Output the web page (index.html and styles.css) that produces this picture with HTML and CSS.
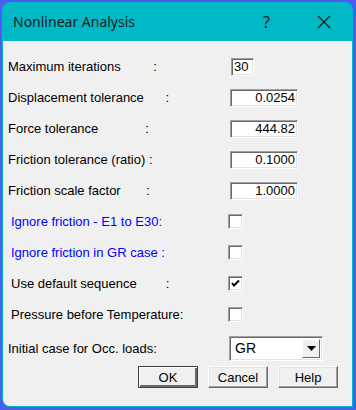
FILE: index.html
```html
<!DOCTYPE html>
<html lang="en">
<head>
    <meta charset="UTF-8">
    <meta name="viewport" content="width=device-width, initial-scale=1.0">
    <title>Nonlinear Analysis</title>
    <link rel="stylesheet" href="styles.css">
</head>
<body>
    <div class="window">
        <div class="titlebar">
            <span class="title">Nonlinear Analysis</span>
            <span class="help">?</span>
            <svg class="close" width="14" height="14" viewBox="0 0 14 14">
                <path d="M1 1 L13 13 M13 1 L1 13" stroke="#1a1a1a" stroke-width="1.2" fill="none"/>
            </svg>
        </div>
        <div class="content">
            <div class="form">
                <label class="lbl">Maximum iterations         :</label>
                <div class="field small">30</div>

                <label class="lbl">Displacement tolerance      :</label>
                <div class="field">0.0254</div>

                <label class="lbl">Force tolerance             :</label>
                <div class="field">444.82</div>

                <label class="lbl">Friction tolerance (ratio) :</label>
                <div class="field">0.1000</div>

                <label class="lbl">Friction scale factor       :</label>
                <div class="field">1.0000</div>

                <label class="lbl blue indent">Ignore friction - E1 to E30:</label>
                <div class="check"></div>

                <label class="lbl blue indent">Ignore friction in GR case :</label>
                <div class="check"></div>

                <label class="lbl indent">Use default sequence        :</label>
                <div class="check">
                    <svg width="11" height="11" viewBox="0 0 11 11">
                        <path d="M2 5 L4 7.5 L9 2.5" stroke="#000" stroke-width="2" fill="none"/>
                    </svg>
                </div>

                <label class="lbl indent">Pressure before Temperature:</label>
                <div class="check"></div>

                <label class="lbl combo-row">Initial case for Occ. loads:</label>
                <div class="combo combo-row">
                    <span class="combo-text">GR</span>
                    <span class="combo-btn">
                        <svg width="9" height="5" viewBox="0 0 9 5"><path d="M0 0 H9 L4.5 5 Z" fill="#000"/></svg>
                    </span>
                </div>
            </div>
            <div class="buttons">
                <button class="btn default">OK</button>
                <button class="btn">Cancel</button>
                <button class="btn">Help</button>
            </div>
        </div>
    </div>
</body>
</html>
```

FILE: styles.css
```css
body {
    margin: 0;
    width: 356px;
    height: 410px;
    background: #4a5cf2;
    font-family: "Liberation Sans", Arial, sans-serif;
    font-size: 13px;
    color: #000;
    overflow: hidden;
}
.window {
    margin: 2px 0 0 2px;
    width: 351px;
    height: 405px;
    display: flex;
    flex-direction: column;
}
.titlebar {
    height: 39px;
    background: #00b8c6;
    border-radius: 8px 8px 0 0;
    display: flex;
    align-items: center;
    color: #1a1a1a;
    font-family: "Noto Sans", "Open Sans", sans-serif;
}
.title {
    font-size: 14px;
    margin-left: 11px;
    flex: 1;
}
.help {
    font-size: 16px;
    margin-right: 47px;
}
.close {
    margin-right: 22px;
}
.content {
    flex: 1;
    background: #f0f0f0;
    border: 1px solid #00b8c6;
    border-top: none;
    border-radius: 0 0 0 8px;
    padding: 10px 0 0 5px;
}
.form {
    display: grid;
    grid-template-columns: 222px auto;
    grid-auto-rows: 31px;
    align-items: center;
}
.lbl {
    white-space: pre;
}
.indent {
    padding-left: 3px;
}
.blue {
    color: #0000ff;
}
.field {
    width: 64px;
    height: 16px;
    line-height: 16px;
    padding-right: 2px;
    text-align: right;
    background: #fff;
    border: 1px solid;
    border-color: #a0a0a0 #fff #fff #a0a0a0;
    box-shadow: inset 1px 1px #696969, inset -1px -1px #e3e3e3;
}
.field.small {
    width: 19px;
    margin-left: 1px;
    padding: 0 0 0 2px;
    text-align: left;
}
.check {
    width: 13px;
    height: 13px;
    margin-left: -2px;
    background: #fff;
    border: 1px solid;
    border-color: #a0a0a0 #fff #fff #a0a0a0;
    box-shadow: inset 1px 1px #696969, inset -1px -1px #e3e3e3;
    display: flex;
    align-items: center;
    justify-content: center;
}
.combo-row {
    margin-top: 5px;
}
.combo {
    width: 92px;
    height: 23px;
    margin-left: -1px;
    background: #fff;
    border: 1px solid;
    border-color: #a0a0a0 #fff #fff #a0a0a0;
    box-shadow: inset 1px 1px #696969, inset -1px -1px #e3e3e3;
    display: flex;
    align-items: center;
    font-size: 14px;
}
.combo-text {
    flex: 1;
    padding-left: 5px;
}
.combo-btn {
    width: 16px;
    height: 17px;
    margin-right: 2px;
    background: #f0f0f0;
    border: 1px solid;
    border-color: #fff #696969 #696969 #fff;
    display: flex;
    align-items: center;
    justify-content: center;
}
.buttons {
    display: flex;
    justify-content: flex-end;
    gap: 10px;
    margin-top: 5px;
    padding-right: 14px;
}
.btn {
    width: 60px;
    height: 22px;
    padding: 0;
    font-family: "Liberation Sans", Arial, sans-serif;
    font-size: 13px;
    color: #000;
    background: #f0f0f0;
    border: 1px solid;
    border-color: #fff #696969 #696969 #fff;
    box-shadow: inset -1px -1px #a0a0a0, inset 1px 1px #e3e3e3;
}
.btn.default {
    border-color: #404040;
    box-shadow: inset 1px 1px #fff, inset -2px -2px #696969;
}
```
